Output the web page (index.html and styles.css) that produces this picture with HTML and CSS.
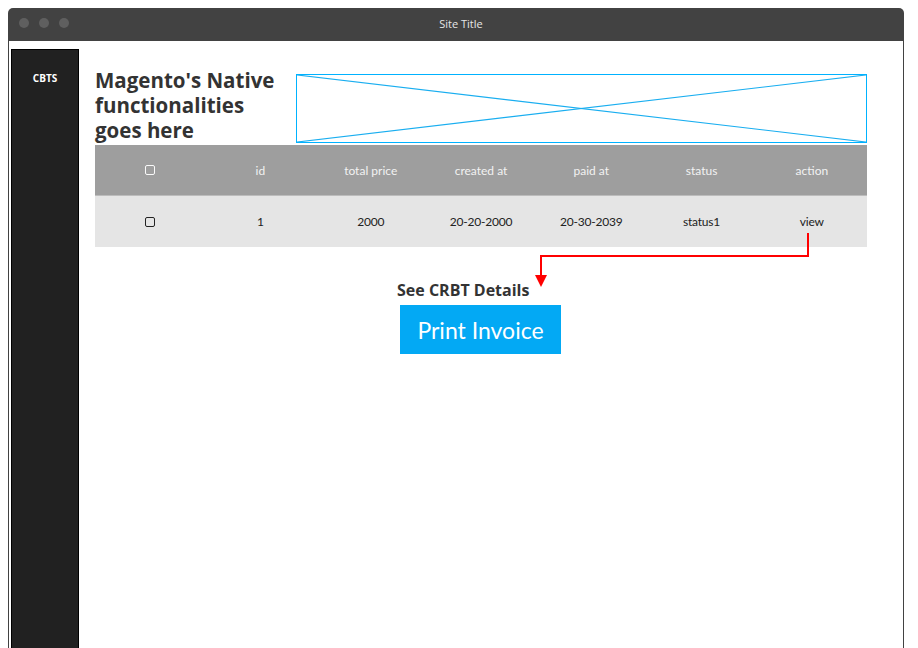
FILE: index.html
```html
<!DOCTYPE html>
<html>
<head>
<meta charset="utf-8">
<link rel="stylesheet" href="styles.css">
</head>
<body>
<div class="window">
  <div class="titlebar">
    <div class="dots"><span class="dot"></span><span class="dot"></span><span class="dot"></span></div>
    <div class="title">Site Title</div>
  </div>
  <div class="content">
    <aside class="sidebar"><div class="brand">CBTS</div></aside>
    <main class="main">
      <div class="top-row">
        <h1 class="heading">Magento's Native functionalities goes here</h1>
        <div class="placeholder">
          <svg class="ph-svg" viewBox="0 0 100 100" preserveAspectRatio="none">
            <line x1="0" y1="0" x2="100" y2="100" vector-effect="non-scaling-stroke"/>
            <line x1="0" y1="100" x2="100" y2="0" vector-effect="non-scaling-stroke"/>
          </svg>
        </div>
      </div>
      <div class="table">
        <div class="thead">
          <div class="cell"><span class="chk chk-light"></span></div>
          <div class="cell">id</div>
          <div class="cell">total price</div>
          <div class="cell">created at</div>
          <div class="cell">paid at</div>
          <div class="cell">status</div>
          <div class="cell">action</div>
        </div>
        <div class="trow">
          <div class="cell"><span class="chk chk-dark"></span></div>
          <div class="cell">1</div>
          <div class="cell">2000</div>
          <div class="cell">20-20-2000</div>
          <div class="cell">20-30-2039</div>
          <div class="cell">status1</div>
          <div class="cell">view</div>
        </div>
      </div>
      <div class="details">
        <div class="details-title">See CRBT Details</div>
        <button class="btn">Print Invoice</button>
      </div>
      <svg class="arrow" width="772" height="260" viewBox="0 0 772 260">
        <polyline points="713,184 713,207 446,207 446,227" fill="none" stroke="#f00" stroke-width="2"/>
        <polygon points="440,226 452,226 446,238" fill="#f00"/>
      </svg>
    </main>
  </div>
</div>
</body>
</html>
```

FILE: styles.css
```css
* { box-sizing: border-box; }
html, body { margin: 0; padding: 0; background: #fff; overflow: hidden; }
body { font-family: Lato, "Open Sans", sans-serif; }

.window {
  margin: 8px 0 0 8px;
  width: 896px;
  height: 640px;
  display: flex;
  flex-direction: column;
}
.titlebar {
  height: 33px;
  background: #424242;
  border-radius: 5px 5px 0 0;
  position: relative;
  display: flex;
  align-items: center;
  justify-content: center;
  flex-shrink: 0;
}
.dots {
  position: absolute;
  left: 11px;
  top: 10px;
  display: flex;
  gap: 10px;
}
.dot {
  width: 10px;
  height: 10px;
  border-radius: 50%;
  background: #5f5f5f;
}
.title {
  color: #e6e6e6;
  font-size: 11px;
  padding-left: 10px;
  padding-bottom: 2px;
  font-family: "Open Sans", sans-serif;
}
.content {
  flex: 1;
  display: flex;
  border-left: 1px solid #424242;
  border-right: 1px solid #424242;
  padding-top: 8px;
  min-height: 0;
}
.sidebar {
  width: 68px;
  margin-left: 2px;
  background: #212121;
  border: 1px solid #000;
  border-bottom: none;
  flex-shrink: 0;
}
.brand {
  color: #fff;
  font-weight: 700;
  font-size: 10px;
  text-align: center;
  margin-top: 21px;
  font-family: "Open Sans", sans-serif;
}
.main {
  position: relative;
  margin-left: 16px;
  width: 772px;
  padding-top: 18px;
}
.top-row {
  display: flex;
  align-items: flex-end;
  height: 76px;
  margin-bottom: 2px;
}
.heading {
  margin: 0;
  width: 201px;
  flex-shrink: 0;
  padding-right: 14px;
  font-family: "Open Sans", sans-serif;
  font-size: 20.5px;
  line-height: 25px;
  font-weight: 700;
  color: #333;
  letter-spacing: 0;
}
.placeholder {
  flex: 1;
  height: 69px;
  border: 1px solid #00b2ff;
}
.ph-svg {
  display: block;
  width: 100%;
  height: 100%;
}
.ph-svg line {
  stroke: #19aef0;
  stroke-width: 1.2;
}
.table { width: 772px; }
.thead, .trow {
  display: grid;
  grid-template-columns: repeat(7, 1fr);
  align-items: center;
  font-size: 12px;
}
.thead {
  height: 51px;
  background: #9e9e9e;
  color: #f2f2f2;
  border-bottom: 1px solid #bcbcbc;
}
.trow {
  height: 51px;
  background: #e5e5e5;
  color: #222;
  letter-spacing: -0.2px;
}
.cell {
  text-align: center;
  display: flex;
  justify-content: center;
  align-items: center;
}
.chk {
  display: inline-block;
  width: 10px;
  height: 10px;
  border-radius: 2px;
}
.chk-light { border: 1.3px solid #fafafa; }
.chk-dark { border: 1.3px solid #222; }
.details {
  margin-left: 302px;
  margin-top: 33px;
}
.details-title {
  font-family: "Open Sans", sans-serif;
  font-size: 16px;
  line-height: 20px;
  font-weight: 700;
  color: #333;
  letter-spacing: 0;
}
.btn {
  margin: 5px 0 0 3px;
  width: 161px;
  height: 49px;
  border: none;
  background: #03a9f4;
  color: #fff;
  font-family: Lato, "Open Sans", sans-serif;
  font-size: 23px;
  font-weight: 400;
  padding: 0;
}
.arrow {
  position: absolute;
  left: 0;
  top: 0;
  pointer-events: none;
}
```
